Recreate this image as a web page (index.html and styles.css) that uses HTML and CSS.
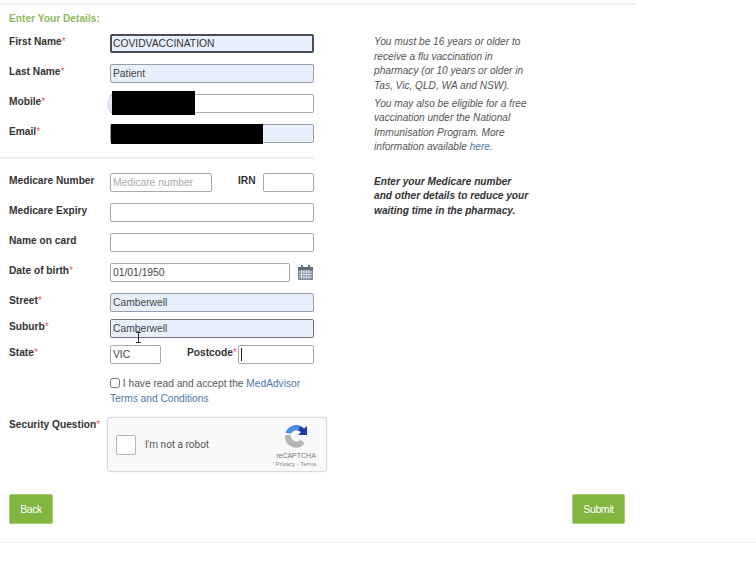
FILE: index.html
```html
<!DOCTYPE html>
<html lang="en">

<head>
    <meta charset="UTF-8">
    <meta name="viewport" content="width=device-width, initial-scale=1.0">
    <title>Enter Your Details</title>
    <link rel="stylesheet" href="styles.css">
</head>

<body>
    <div class="page">
        <h3 class="heading">Enter Your Details:</h3>
        <div class="columns">
            <form class="details">
                <div class="section">
                    <div class="row">
                        <label>First Name<span class="req">*</span></label>
                        <input class="field filled focused" type="text" value="COVIDVACCINATION">
                    </div>
                    <div class="row">
                        <label>Last Name<span class="req">*</span></label>
                        <input class="field filled" type="text" value="Patient">
                    </div>
                    <div class="row">
                        <label>Mobile<span class="req">*</span></label>
                        <input class="field" type="text">
                        <div class="blob"></div>
                        <div class="redact redact-mobile"></div>
                    </div>
                    <div class="row">
                        <label>Email<span class="req">*</span></label>
                        <input class="field filled" type="text">
                        <div class="redact redact-email"></div>
                    </div>
                </div>

                <div class="section second">
                    <div class="row">
                        <label>Medicare Number</label>
                        <input class="field medicare" type="text" placeholder="Medicare number">
                        <label class="inline-label irn">IRN</label>
                        <input class="field irn-input" type="text">
                    </div>
                    <div class="row">
                        <label>Medicare Expiry</label>
                        <input class="field" type="text">
                    </div>
                    <div class="row">
                        <label>Name on card</label>
                        <input class="field" type="text">
                    </div>
                    <div class="row">
                        <label>Date of birth<span class="req">*</span></label>
                        <input class="field dob" type="text" value="01/01/1950">
                        <svg class="calendar" width="15" height="15" viewBox="0 0 15 15">
                            <rect x="0" y="2" width="15" height="13" rx="1" fill="#7d8b99"/>
                            <rect x="0" y="2" width="15" height="3" fill="#5f6b78"/>
                            <rect x="3" y="0" width="2" height="4" fill="#5f6b78"/>
                            <rect x="10" y="0" width="2" height="4" fill="#5f6b78"/>
                            <path d="M1 7h13M1 9.500h13M1 12h13M3.500 5v9M6 5v9M8.500 5v9M11 5v9" stroke="#d5dce4" stroke-width="1" fill="none"/>
                        </svg>
                    </div>
                    <div class="row row-tight">
                        <label>Street<span class="req">*</span></label>
                        <input class="field filled" type="text" value="Camberwell">
                    </div>
                    <div class="row row-tight">
                        <label>Suburb<span class="req">*</span></label>
                        <input class="field filled focused-soft" type="text" value="Camberwell">
                        <svg class="ibeam" width="7" height="11" viewBox="0 0 7 11">
                            <path d="M1 .5h5M3.500 .5v10M1 10.500h5" stroke="#333" stroke-width="1" fill="none"/>
                        </svg>
                    </div>
                    <div class="row">
                        <label>State<span class="req">*</span></label>
                        <input class="field state" type="text" value="VIC">
                        <label class="inline-label postcode">Postcode<span class="req">*</span></label>
                        <div class="field postcode-input"><span class="caret"></span></div>
                    </div>
                </div>

                <p class="terms">
                    <input class="tick" type="checkbox">
                    I have read and accept the <a href="#">MedAdvisor Terms and Conditions</a>
                </p>

                <div class="security">
                    <label>Security Question<span class="req">*</span></label>
                    <div class="captcha">
                        <div class="captcha-box"></div>
                        <span class="captcha-text">I'm not a robot</span>
                        <div class="captcha-brand">
                            <svg width="24" height="24" viewBox="0 0 24 24">
                                <path d="M1.500 9A11 11 0 0 1 17 2.200L14.500 7A5.500 5.500 0 0 0 7.200 9.500Z" fill="#4a90e2"/>
                                <path d="M16 2A11 11 0 0 1 20 4.500L23 2V11H14L17 8A6 6 0 0 0 14.500 7Z" fill="#1c3aa9"/>
                                <path d="M1 11H7A5.500 5.500 0 0 0 16.500 15.500L20.500 19.500A11 11 0 0 1 1 12Z" fill="#b5b5b5"/>
                            </svg>
                            <span class="brand-name">reCAPTCHA</span>
                            <span class="brand-links">Privacy - Terms</span>
                        </div>
                    </div>
                </div>
            </form>

            <div class="notes">
                <p>You must be 16 years or older to receive a flu vaccination in pharmacy (or 10 years or older in Tas, Vic, QLD, WA and NSW).</p>
                <p>You may also be eligible for a free vaccination under the National Immunisation Program. More information available <a href="#">here.</a></p>
                <p class="notes-strong">Enter your Medicare number and other details to reduce your waiting time in the pharmacy.</p>
            </div>
        </div>

        <div class="actions">
            <button class="btn" type="button">Back</button>
            <button class="btn btn-submit" type="button">Submit</button>
        </div>
    </div>
    <div class="bottom-rule"></div>
</body>

</html>
```

FILE: styles.css
```css
body {
    margin: 0;
    font-family: "Liberation Sans", Arial, sans-serif;
    font-size: 11px;
    color: #333;
    background-color: white;
}

a {
    color: #4a7aa8;
    text-decoration: none;
}

.page {
    width: 636px;
    margin-top: 3px;
    border-top: 2px solid #eeeeee;
}

.heading {
    margin: 0;
    padding: 8px 0 0 9px;
    height: 20px;
    box-sizing: border-box;
    font-size: 10.2px;
    line-height: 12px;
    color: #8db85f;
}

.columns {
    display: flex;
}

.details {
    width: 327px;
    flex: none;
}

.section {
    width: 314px;
    padding: 9px 0 3px;
    box-sizing: border-box;
    border-bottom: 2px solid #eeeeee;
}

.section.second {
    border-bottom: none;
    padding: 14px 0 0;
}

.row {
    position: relative;
    display: flex;
    align-items: flex-start;
    height: 19px;
    margin-bottom: 11px;
    padding-left: 9px;
}

.row-tight {
    margin-bottom: 7px;
}

.row label,
.security label {
    flex: none;
    width: 101px;
    margin-top: 1px;
    font-size: 10.2px;
    font-weight: bold;
    line-height: 13px;
    color: #333;
}

.row .inline-label {
    width: auto;
}

.req {
    color: #e0685a;
    font-weight: normal;
}

.field {
    flex: 1;
    min-width: 0;
    height: 19px;
    box-sizing: border-box;
    margin: 0;
    padding: 0 2px 1px;
    border: 1px solid #a9a9a9;
    border-radius: 2px;
    background-color: white;
    font-family: "Liberation Sans", Arial, sans-serif;
    font-size: 10.3px;
    color: #444;
    outline: none;
}

.field::placeholder {
    color: #aaa;
}

.filled {
    background-color: #e8f0fe;
    border-color: #9a9fa6;
}

.focused {
    border: 2px solid #4b4f55;
    padding: 0 1px;
    color: #333;
}

.focused-soft {
    border-color: #6f7379;
}

.medicare {
    flex: none;
    width: 102px;
}

.irn {
    margin-left: 26px;
}

.irn-input {
    flex: none;
    width: 51px;
    margin-left: auto;
}

.dob {
    flex: none;
    width: 180px;
}

.calendar {
    flex: none;
    margin: 2px 0 0 8px;
}

.state {
    flex: none;
    width: 51px;
}

.postcode {
    margin-left: 26px;
}

.postcode-input {
    flex: none;
    width: 76px;
    margin-left: auto;
    display: flex;
    align-items: center;
}

.caret {
    width: 1px;
    height: 13px;
    background-color: #222;
}

.ibeam {
    position: absolute;
    left: 135px;
    top: 13px;
}

.blob {
    position: absolute;
    left: 107px;
    top: 3px;
    width: 8px;
    height: 14px;
    border-radius: 50%;
    background-color: #e3e3f6;
}

.redact {
    position: absolute;
    background-color: black;
}

.redact-mobile {
    left: 112px;
    top: -3px;
    width: 83px;
    height: 24px;
}

.redact-email {
    left: 111px;
    top: 0;
    width: 152px;
    height: 20px;
}

.terms {
    width: 204px;
    margin: 13px 0 0 110px;
    font-size: 10.2px;
    line-height: 14.500px;
    color: #555;
}

.tick {
    width: 10px;
    height: 10px;
    margin: 0;
    vertical-align: -1px;
}

.security {
    display: flex;
    margin-top: 11px;
    padding-left: 9px;
}

.security label {
    width: 98px;
}

.captcha {
    display: flex;
    align-items: center;
    width: 220px;
    height: 55px;
    box-sizing: border-box;
    padding-left: 8px;
    border: 1px solid #d9d9d9;
    border-radius: 3px;
    background-color: #f9f9f9;
    box-shadow: 0 0 3px rgba(0, 0, 0, 0.08);
}

.captcha-box {
    width: 20px;
    height: 20px;
    box-sizing: border-box;
    border: 1px solid #b5b5b5;
    border-radius: 2px;
    background-color: white;
}

.captcha-text {
    margin-left: 9px;
    font-family: Roboto, "Liberation Sans", sans-serif;
    font-size: 10px;
    color: #555;
}

.captcha-brand {
    display: flex;
    flex-direction: column;
    align-items: center;
    margin-left: auto;
    width: 50px;
    margin-right: 5px;
    padding-top: 3px;
}

.brand-name {
    margin-top: 3px;
    font-size: 7px;
    line-height: 9px;
    color: #777;
}

.brand-links {
    font-size: 6px;
    line-height: 9px;
    color: #888;
}

.notes {
    width: 157px;
    margin-left: 47px;
    padding-top: 10px;
    font-size: 10.150px;
    font-style: italic;
    line-height: 14.500px;
    color: #555;
}

.notes p {
    margin: 0 0 3.500px;
}

.notes .notes-strong {
    margin-top: 20px;
    font-weight: bold;
    color: #333;
}

.actions {
    display: flex;
    justify-content: space-between;
    margin-top: 22px;
    padding: 0 11px 0 9px;
}

.btn {
    width: 44px;
    height: 30px;
    padding: 0;
    border: 1px solid #a5cc78;
    border-radius: 2px;
    background-color: #82b440;
    font-family: "Liberation Sans", Arial, sans-serif;
    font-size: 10.500px;
    letter-spacing: -0.4px;
    color: white;
}

.btn-submit {
    width: 53px;
}

.bottom-rule {
    height: 1px;
    margin-top: 18px;
    background-color: #ececec;
}
```
